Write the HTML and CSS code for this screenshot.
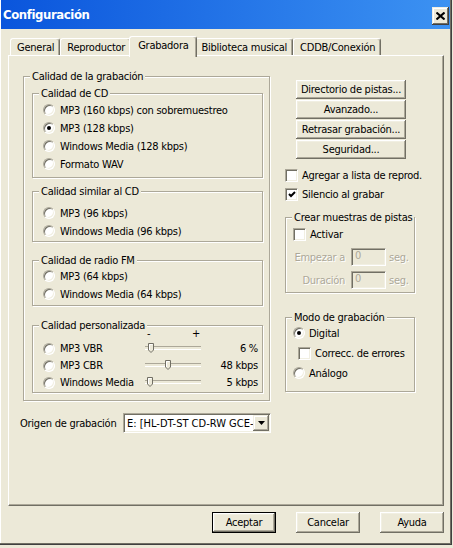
FILE: index.html
```html
<!DOCTYPE html>
<html lang="es">
<head>
<meta charset="utf-8">
<title>Configuración</title>
<link rel="stylesheet" href="styles.css">
</head>
<body>
<div class="window">
  <header class="titlebar">
    <span class="title">Configuración</span>
    <span class="close"><svg width="9" height="8" viewBox="0 0 9 8"><path d="M0.5 0.5L8.5 7.5M8.5 0.5L0.5 7.5" stroke="#000" stroke-width="2"/></svg></span>
  </header>
  <div class="body">
    <nav class="tabs">
      <div class="tab">General</div>
      <div class="tab">Reproductor</div>
      <div class="tab active">Grabadora</div>
      <div class="tab">Biblioteca musical</div>
      <div class="tab">CDDB/Conexión</div>
    </nav>
    <section class="panel">
      <div class="col-left">
        <div class="group outer">
          <div class="legend">Calidad de la grabación</div>
          <div class="group inner g-cd">
            <div class="legend">Calidad de CD</div>
            <div class="opt"><span class="radio"></span>MP3 (160 kbps) con sobremuestreo</div>
            <div class="opt"><span class="radio on"></span>MP3 (128 kbps)</div>
            <div class="opt"><span class="radio"></span>Windows Media (128 kbps)</div>
            <div class="opt"><span class="radio"></span>Formato WAV</div>
          </div>
          <div class="group inner g-sim">
            <div class="legend">Calidad similar al CD</div>
            <div class="opt"><span class="radio"></span>MP3 (96 kbps)</div>
            <div class="opt"><span class="radio"></span>Windows Media (96 kbps)</div>
          </div>
          <div class="group inner g-fm">
            <div class="legend">Calidad de radio FM</div>
            <div class="opt"><span class="radio"></span>MP3 (64 kbps)</div>
            <div class="opt"><span class="radio"></span>Windows Media (64 kbps)</div>
          </div>
          <div class="group inner g-pers">
            <div class="legend">Calidad personalizada</div>
            <div class="scale"><span>-</span><span>+</span></div>
            <div class="opt"><span class="radio"></span><span class="olabel">MP3 VBR</span><span class="slider"><span class="thumb" style="left:3px"><svg width="6" height="10" viewBox="0 0 6 10"><path d="M0.5 0.5h5v6.5l-2.5 2.5l-2.5-2.5z" fill="#ECE9D8" stroke="#716F64"/><path d="M1.5 7V1.5H4.5" fill="none" stroke="#fff"/></svg></span></span><span class="val">6 %</span></div>
            <div class="opt"><span class="radio"></span><span class="olabel">MP3 CBR</span><span class="slider"><span class="thumb" style="left:20px"><svg width="6" height="10" viewBox="0 0 6 10"><path d="M0.5 0.5h5v6.5l-2.5 2.5l-2.5-2.5z" fill="#ECE9D8" stroke="#716F64"/><path d="M1.5 7V1.5H4.5" fill="none" stroke="#fff"/></svg></span></span><span class="val">48 kbps</span></div>
            <div class="opt"><span class="radio"></span><span class="olabel">Windows Media</span><span class="slider"><span class="thumb" style="left:2px"><svg width="6" height="10" viewBox="0 0 6 10"><path d="M0.5 0.5h5v6.5l-2.5 2.5l-2.5-2.5z" fill="#ECE9D8" stroke="#716F64"/><path d="M1.5 7V1.5H4.5" fill="none" stroke="#fff"/></svg></span></span><span class="val">5 kbps</span></div>
          </div>
        </div>
        <div class="source">
          <span class="lbl">Origen de grabación</span>
          <div class="select">
            <span class="stext">E: [HL-DT-ST CD-RW GCE-8483B]</span>
            <span class="sbtn"><svg width="7" height="4" viewBox="0 0 7 4"><path d="M0 0h7L3.5 4z" fill="#000"/></svg></span>
          </div>
        </div>
      </div>
      <div class="col-right">
        <div class="btnstack">
          <div class="btn">Directorio de pistas...</div>
          <div class="btn">Avanzado...</div>
          <div class="btn">Retrasar grabación...</div>
          <div class="btn">Seguridad...</div>
        </div>
        <div class="checks">
          <div class="chk-row"><span class="check"></span>Agregar a lista de reprod.</div>
          <div class="chk-row"><span class="check"><svg width="8" height="7" viewBox="0 0 8 7"><path d="M1 3l2 2 4-4" fill="none" stroke="#000" stroke-width="2"/></svg></span>Silencio al grabar</div>
        </div>
        <div class="group crear">
          <div class="legend">Crear muestras de pistas</div>
          <div class="chk-row"><span class="check"></span>Activar</div>
          <div class="frow"><span class="flabel dis">Empezar a</span><span class="field">0</span><span class="unit dis">seg.</span></div>
          <div class="frow"><span class="flabel dis">Duración</span><span class="field">0</span><span class="unit dis">seg.</span></div>
        </div>
        <div class="group modo">
          <div class="legend">Modo de grabación</div>
          <div class="opt"><span class="radio on"></span>Digital</div>
          <div class="opt sub"><span class="check"></span>Correcc. de errores</div>
          <div class="opt"><span class="radio"></span>Análogo</div>
        </div>
      </div>
    </section>
    <footer class="footer">
      <div class="btn fbtn default">Aceptar</div>
      <div class="btn fbtn">Cancelar</div>
      <div class="btn fbtn">Ayuda</div>
    </footer>
  </div>
</div>
</body>
</html>
```
FILE: styles.css
```css
* { box-sizing: border-box; }
body {
  margin: 0;
  background: #ECE9D8;
  font-family: "DejaVu Sans Condensed", "Liberation Sans", Arial, sans-serif;
  font-size: 11px;
  letter-spacing: -0.25px;
  color: #000;
}
.window {
  width: 452px;
  height: 545px;
  padding: 0 1px;
  background: #ECE9D8;
  border-right: 1px solid #404040;
  border-bottom: 1px solid #404040;
  box-shadow: inset -1px -1px #716F64, inset 1px 0 #fff;
}
.titlebar {
  height: 29px;
  display: flex;
  justify-content: space-between;
  align-items: center;
  padding: 0 1px 0 2px;
  background: linear-gradient(to right, #0A55DC, #3C92F2);
}
.title { color: #fff; font-weight: bold; font-size: 13px; letter-spacing: -0.4px; }
.close {
  width: 17px;
  height: 18px;
  margin-top: 3px;
  display: flex;
  align-items: center;
  justify-content: center;
  background: #ECE9D8;
  box-shadow: inset -1px -1px #404040, inset 1px 1px #F1EFE2, inset -2px -2px #716F64, inset 2px 2px #fff;
}
.body { padding: 7px 6px 0 7px; }
.tabs {
  display: flex;
  align-items: flex-end;
  height: 19px;
  padding-left: 2px;
  position: relative;
  z-index: 1;
}
.tab {
  height: 17px;
  padding: 0 5px 0 6px;
  line-height: 17px;
  border-top: 1px solid #fff;
  border-left: 1px solid #fff;
  border-right: 1px solid #716F64;
  box-shadow: inset -1px 0 #ACA899;
  border-radius: 3px 3px 0 0;
  background: #ECE9D8;
  white-space: nowrap;
}
.tab.active {
  height: 21px;
  margin: 0 -2px -2px;
  padding: 0 7px 0 8px;
  line-height: 17px;
  position: relative;
  z-index: 2;
}
.panel {
  height: 451px;
  border: 1px solid;
  border-color: #fff #716F64 #716F64 #fff;
  box-shadow: inset -1px -1px #ACA899;
  display: flex;
  padding: 20px 0 0 11px;
}
.col-left { width: 251px; }
.group {
  --pl: 0px;
  border: 1px solid #ACA899;
  box-shadow: inset 1px 1px #fff, 1px 1px #fff;
  padding-left: var(--pl);
}
.legend {
  height: 13px;
  line-height: 13px;
  margin: -7px 0 0 calc(6px - var(--pl));
  padding: 0 2px;
  background: #ECE9D8;
  width: max-content;
  white-space: nowrap;
}
.outer { --pl: 8px; margin-left: 3px; width: 247px; padding-right: 6px; padding-bottom: 7px; }
.inner { --pl: 10px; padding-right: 4px; }
.g-cd { margin-top: 10px; padding-bottom: 4px; }
.g-cd .legend { margin-bottom: 1px; }
.g-sim { margin-top: 13px; padding-bottom: 1px; }
.g-sim .legend { margin-bottom: 6px; }
.g-fm { margin-top: 18px; padding-bottom: 2px; }
.g-pers { margin-top: 19px; padding-bottom: 1px; }
.scale {
  height: 10px;
  line-height: 10px;
  margin: -3px 0 1px 102px;
  width: 56px;
  display: flex;
  justify-content: space-between;
  padding: 0 1px 0 2px;
}
.opt { display: flex; align-items: center; height: 18px; white-space: nowrap; }
.opt .radio { margin-right: 5px; }
.g-pers .opt { height: 17px; }
.olabel { width: 85px; }
.slider { position: relative; width: 56px; height: 12px; flex: none; }
.slider::before {
  content: "";
  position: absolute;
  left: 0;
  right: 0;
  top: 3px;
  height: 2px;
  border-top: 1px solid #ACA899;
  border-bottom: 1px solid #fff;
}
.thumb { position: absolute; top: 0; display: flex; }
.val { flex: 1; text-align: right; }
.radio {
  width: 12px;
  height: 12px;
  flex: none;
  border-radius: 50%;
  border: 1px solid;
  border-color: #ACA899 #fff #fff #ACA899;
  background: #fff;
  box-shadow: inset 1px 1px #716F64, inset -1px -1px #F1EFE2;
  display: flex;
  align-items: center;
  justify-content: center;
}
.radio.on::after {
  content: "";
  width: 4px;
  height: 4px;
  border-radius: 50%;
  background: #000;
}
.check {
  width: 13px;
  height: 13px;
  flex: none;
  margin-right: 4px;
  border: 1px solid;
  border-color: #ACA899 #fff #fff #ACA899;
  background: #fff;
  box-shadow: inset 1px 1px #716F64, inset -1px -1px #F1EFE2;
  display: flex;
  align-items: center;
  justify-content: center;
}
.source { display: flex; align-items: center; height: 20px; margin-top: 12px; }
.source .lbl { flex: 1; white-space: nowrap; }
.select {
  width: 148px;
  height: 20px;
  flex: none;
  display: flex;
  align-items: center;
  padding: 1px;
  border: 1px solid;
  border-color: #ACA899 #fff #fff #ACA899;
  box-shadow: inset 1px 1px #716F64, inset -1px -1px #F1EFE2;
  background: #fff;
}
.stext { flex: 1; overflow: hidden; white-space: nowrap; padding-left: 2px; letter-spacing: 0; }
.sbtn {
  width: 16px;
  height: 16px;
  flex: none;
  display: flex;
  align-items: center;
  justify-content: center;
  background: #ECE9D8;
  box-shadow: inset -1px -1px #716F64, inset 1px 1px #F1EFE2, inset -2px -2px #ACA899, inset 2px 2px #fff;
}
.col-right { margin-left: 14px; width: 130px; }
.btnstack {
  margin: 4px 0 0 11px;
  width: 110px;
  display: flex;
  flex-direction: column;
  gap: 1px;
}
.btn {
  height: 19px;
  display: flex;
  align-items: center;
  justify-content: center;
  white-space: nowrap;
  background: #ECE9D8;
  box-shadow: inset -1px -1px #716F64, inset 1px 1px #fff, inset -2px -2px #ACA899, inset 2px 2px #F1EFE2;
}
.checks { margin-top: 7px; }
.chk-row { display: flex; align-items: center; height: 19px; white-space: nowrap; }
.crear { --pl: 7px; margin-top: 13px; width: 130px; padding-bottom: 3px; }
.crear .legend { margin-bottom: 1px; }
.crear .chk-row { height: 18px; }
.frow { display: flex; align-items: center; height: 18px; margin-top: 5px; }
.flabel { width: 52px; text-align: right; margin-right: 6px; white-space: nowrap; }
.field {
  width: 35px;
  height: 18px;
  padding-left: 3px;
  line-height: 14px;
  color: #ACA899;
  border: 1px solid;
  border-color: #ACA899 #fff #fff #ACA899;
  box-shadow: inset 1px 1px #716F64, inset -1px -1px #F1EFE2;
  background: #ECE9D8;
}
.unit { margin-left: 3px; }
.dis { color: #ACA899; text-shadow: 1px 1px #fff; }
.modo { --pl: 7px; margin-top: 24px; width: 130px; padding-bottom: 8px; }
.modo .legend { margin-bottom: -1px; }
.modo .opt { height: 20px; }
.modo .opt .radio { margin-right: 4px; }
.modo .sub { padding-left: 5px; }
.footer {
  display: flex;
  justify-content: flex-end;
  gap: 20px;
  margin-top: 6px;
}
.fbtn { width: 64px; height: 21px; }
.default { border: 1px solid #000; }
```
